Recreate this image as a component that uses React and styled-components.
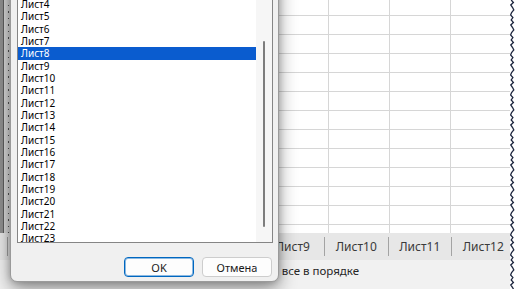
import React from "react";
import styled, { createGlobalStyle } from "styled-components";

const GlobalStyle = createGlobalStyle`
  html, body { margin: 0; padding: 0; background: #fff; overflow: hidden; }
  #root { width: 516px; height: 289px; }
`;

const Screen = styled.div`
  display: flex;
  width: 516px;
  height: 289px;
  overflow: hidden;
  font-family: "Noto Sans", "Open Sans", sans-serif;
`;

const ExcelWindow = styled.div`
  position: relative;
  width: 510px;
  height: 289px;
  flex: none;
  display: flex;
  flex-direction: column;
  overflow: hidden;
  background: #fff;
`;

const SheetArea = styled.div`
  display: flex;
  height: 233px;
  flex: none;
  overflow: hidden;
`;

const RowHeader = styled.div`
  width: 10px;
  flex: none;
  background:
    repeating-linear-gradient(to bottom, transparent 0 5px, #555 5px 6.5px) 8px 0 / 1px 100% no-repeat,
    linear-gradient(to right, #8e8e8e 0 3px, #5e5e5e 3px 4px, #d9d9d9 4px);
`;

const Grid = styled.div`
  flex: 1;
  display: flex;
  flex-direction: column;
`;

const GridRow = styled.div`
  display: flex;
  flex: none;
  height: ${(p) => p.$h}px;
`;

const Cell = styled.div`
  flex: none;
  width: ${(p) => p.$w}px;
  box-sizing: border-box;
  border-right: 1px solid #d6d6d6;
  border-bottom: 1px solid #d6d6d6;
`;

const TabBar = styled.div`
  height: 27px;
  flex: none;
  box-sizing: border-box;
  background: #e7e7e7;
  display: flex;
  align-items: center;
  padding-left: 6.5px;
`;

const SheetTab = styled.div`
  flex: none;
  width: 63.5px;
  height: 19px;
  box-sizing: border-box;
  border-left: 1px solid #a3a3a3;
  display: flex;
  align-items: center;
  justify-content: center;
  font-size: 12px;
  color: #3a3a3a;
  white-space: nowrap;
`;

const StatusBar = styled.div`
  flex: 1;
  background: #f1f1f1;
  display: flex;
  align-items: flex-start;
  padding-top: 3px;
`;

const StatusLeft = styled.div`
  width: 359px;
  flex: none;
  display: flex;
  justify-content: flex-end;
  white-space: nowrap;
  font-size: 11.5px;
  line-height: 15px;
  color: #262626;
`;

const Dialog = styled.div`
  position: absolute;
  left: 10px;
  top: -51px;
  width: 269px;
  box-sizing: border-box;
  background: #f0f0f0;
  border: 1px solid #9a9a9a;
  border-radius: 7px;
  padding: 10px 5px 4px 6px;
  box-shadow: 0 7px 18px rgba(0, 0, 0, 0.42), 0 0 6px rgba(0, 0, 0, 0.2);
  display: flex;
  flex-direction: column;
`;

const ListBox = styled.div`
  height: 283px;
  box-sizing: border-box;
  border: 1px solid #858585;
  background: #fff;
  display: flex;
  overflow: hidden;
`;

const Items = styled.div`
  flex: 1;
  display: flex;
  flex-direction: column;
`;

const Item = styled.div`
  flex: none;
  height: 12.33px;
  line-height: 12.33px;
  padding-left: 3px;
  font-size: 10px;
  color: ${(p) => (p.$selected ? "#fff" : "#000")};
  background: ${(p) => (p.$selected ? "#0a5ccf" : "transparent")};
  white-space: nowrap;
`;

const ScrollTrack = styled.div`
  width: 16px;
  flex: none;
  background: #f6f6f6;
  display: flex;
  justify-content: center;
`;

const ScrollThumb = styled.div`
  width: 2px;
  margin-top: ${(p) => p.$top}px;
  height: ${(p) => p.$len}px;
  background: #7d7d7d;
  border-radius: 1px;
`;

const ButtonRow = styled.div`
  display: flex;
  justify-content: flex-end;
  gap: 8px;
  margin-top: 14px;
  padding-right: 1px;
`;

const Button = styled.button`
  width: 70px;
  height: 20px;
  box-sizing: border-box;
  padding: 0;
  font-family: "Noto Sans", "Open Sans", sans-serif;
  font-size: 11px;
  color: #1a1a1a;
  background: #fdfdfd;
  border: 1px solid ${(p) => (p.$primary ? "#0067c0" : "#cdcdcd")};
  box-shadow: ${(p) => (p.$primary ? "inset 0 0 0 1px rgba(0,103,192,0.45)" : "none")};
  border-radius: 4px;
`;

const TornEdge = styled.svg`
  width: 6px;
  height: 289px;
  flex: none;
  display: block;
  background: #fff;
`;

const colWidths = [75, 61, 61, 61, 61, 61, 61, 61];
const rowHeights = [16, ...Array(12).fill(19)];
const sheets = Array.from({ length: 30 }, (_, i) => `Лист${i + 1}`);
const tabs = [5, 6, 7, 8, 9, 10, 11, 12];

function jagged() {
  const pts = [];
  for (let y = 0, i = 0; y <= 292; y += 2.5, i++) {
    const x = [1.2, 3.4, 0.8, 2.6, 3.8, 1.6, 0.6, 2.9][i % 8];
    pts.push(`${x},${y}`);
  }
  return pts.join(" ");
}

export default function App() {
  return (
    <Screen>
      <GlobalStyle />
      <ExcelWindow>
        <SheetArea>
          <RowHeader />
          <Grid>
            {rowHeights.map((h, r) => (
              <GridRow key={r} $h={h}>
                {colWidths.map((w, c) => (
                  <Cell key={c} $w={w} />
                ))}
              </GridRow>
            ))}
          </Grid>
        </SheetArea>
        <TabBar>
          {tabs.map((n) => (
            <SheetTab key={n}>Лист{n}</SheetTab>
          ))}
        </TabBar>
        <StatusBar>
          <StatusLeft>Специальные возможности: все в порядке</StatusLeft>
        </StatusBar>

        <Dialog>
          <ListBox>
            <Items>
              {sheets.map((s) => (
                <Item key={s} $selected={s === "Лист8"}>
                  {s}
                </Item>
              ))}
            </Items>
            <ScrollTrack>
              <ScrollThumb $top={80} $len={186} />
            </ScrollTrack>
          </ListBox>
          <ButtonRow>
            <Button $primary>OK</Button>
            <Button>Отмена</Button>
          </ButtonRow>
        </Dialog>
      </ExcelWindow>
      <TornEdge viewBox="0 0 6 289" preserveAspectRatio="none">
        <polyline points={jagged()} fill="none" stroke="#1f2840" strokeWidth="1.3" />
      </TornEdge>
    </Screen>
  );
}
